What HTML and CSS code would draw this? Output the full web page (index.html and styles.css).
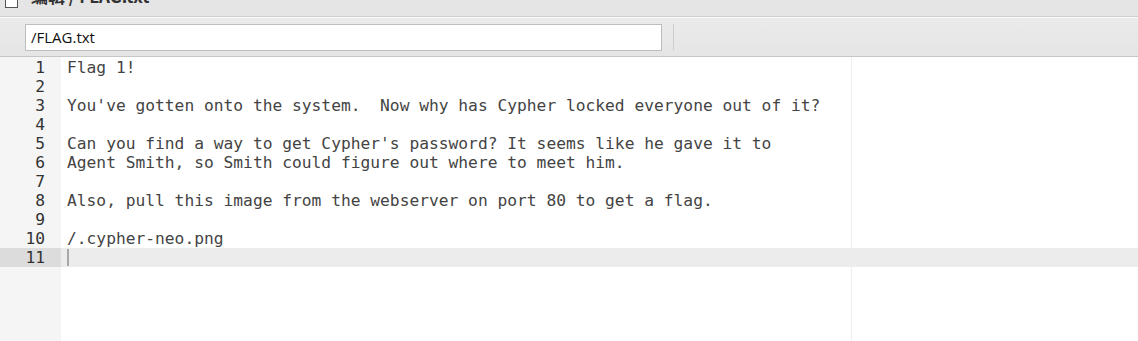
FILE: index.html
```html
<!DOCTYPE html>
<html lang="zh">
<head>
<meta charset="utf-8">
<title>FLAG.txt</title>
<link rel="stylesheet" href="styles.css">
</head>
<body>
<div class="app">
  <div class="titlebar">
    <div class="title-inner">
      <span class="check"></span>
      <span class="title-text">编辑 / FLAG.txt</span>
    </div>
  </div>
  <div class="toolbar">
    <div class="path-input">/FLAG.txt</div>
    <div class="sep"></div>
  </div>
  <div class="editor">
    <div class="gutter">
      <div class="num">1</div>
      <div class="num">2</div>
      <div class="num">3</div>
      <div class="num">4</div>
      <div class="num">5</div>
      <div class="num">6</div>
      <div class="num">7</div>
      <div class="num">8</div>
      <div class="num">9</div>
      <div class="num">10</div>
      <div class="num active">11</div>
    </div>
    <div class="content">
      <div class="line">Flag 1!</div>
      <div class="line"></div>
      <div class="line">You've gotten onto the system.  Now why has Cypher locked everyone out of it?</div>
      <div class="line"></div>
      <div class="line">Can you find a way to get Cypher's password? It seems like he gave it to</div>
      <div class="line">Agent Smith, so Smith could figure out where to meet him.</div>
      <div class="line"></div>
      <div class="line">Also, pull this image from the webserver on port 80 to get a flag.</div>
      <div class="line"></div>
      <div class="line">/.cypher-neo.png</div>
      <div class="line active"><span class="cursor"></span></div>
    </div>
  </div>
</div>
</body>
</html>
```
FILE: styles.css
```css
html, body {
  margin: 0;
  padding: 0;
  background: #ffffff;
}
.app {
  width: 1138px;
  height: 341px;
  overflow: hidden;
  display: flex;
  flex-direction: column;
}
.titlebar {
  height: 16px;
  background: #e5e5e5;
  border-bottom: 1px solid #cfcfcf;
  overflow: hidden;
  flex: none;
}
.title-inner {
  display: flex;
  align-items: center;
  margin-top: -15px;
  height: 22px;
  padding-left: 5px;
}
.check {
  width: 11px;
  height: 15px;
  border: 1px solid #555;
  background: #fff;
  margin-top: 6px;
  flex: none;
}
.title-text {
  margin-left: 13px;
  font-family: "Noto Sans CJK SC", "Liberation Sans", sans-serif;
  font-size: 17px;
  font-weight: bold;
  color: #333;
  line-height: 22px;
}
.toolbar {
  flex: none;
  background: linear-gradient(#ebebeb, #e5e5e5);
  border-top: 1px solid #fafafa;
  border-bottom: 1px solid #c6c6c6;
  display: flex;
  align-items: flex-start;
  padding-top: 6px;
  box-sizing: border-box;
  height: 40px;
}
.path-input {
  margin-left: 25px;
  width: 637px;
  height: 27px;
  box-sizing: border-box;
  background: #fff;
  border: 1px solid #bdbdbd;
  font-family: "Open Sans", "Liberation Sans", sans-serif;
  font-size: 15px;
  line-height: 25px;
  padding-left: 5px;
  color: #111;
}
.sep {
  width: 1px;
  height: 26px;
  background: #c9cdd1;
  margin-left: 11px;
}
.editor {
  flex: 1;
  display: flex;
  font-family: "DejaVu Sans Mono", monospace;
  font-size: 16.25px;
  line-height: 20px;
  color: #444;
}
.gutter {
  width: 61px;
  flex: none;
  background: #f5f5f5;
  padding-top: 1px;
  color: #333;
}
.num {
  height: 19px;
  text-align: right;
  padding-right: 16px;
}
.num.active {
  background: #dcdcdc;
}
.content {
  flex: 1;
  padding-top: 1px;
  background: linear-gradient(to right, transparent 790px, #efefef 790px, #efefef 791px, transparent 791px);
}
.line {
  height: 19px;
  padding-left: 6px;
  white-space: pre;
}
.line.active {
  background: #ececec;
  display: flex;
  align-items: center;
}
.cursor {
  display: block;
  width: 2px;
  height: 17px;
  background: #a8a8a8;
}
```
